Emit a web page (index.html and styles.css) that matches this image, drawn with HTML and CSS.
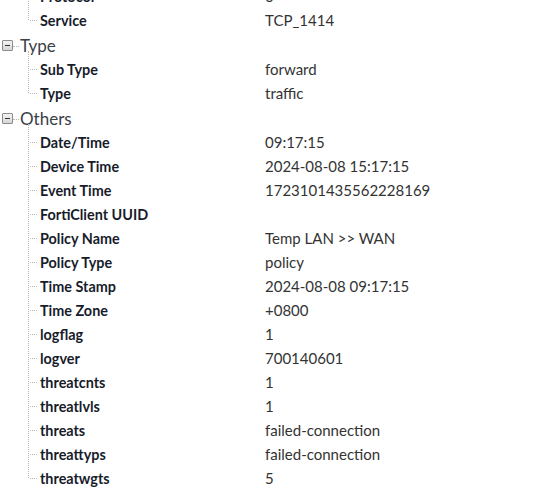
FILE: index.html
```html
<!DOCTYPE html>
<html>
<head>
<meta charset="utf-8">
<link rel="stylesheet" href="styles.css">
</head>
<body>
<div class="tree">
  <ul class="children">
    <li class="row"><span class="key">Protocol</span><span class="val">6</span></li>
    <li class="row"><span class="key">Service</span><span class="val">TCP_1414</span></li>
  </ul>
  <div class="group">
    <div class="head"><span class="toggle"></span><span class="title">Type</span></div>
    <ul class="children">
      <li class="row"><span class="key">Sub Type</span><span class="val">forward</span></li>
      <li class="row"><span class="key">Type</span><span class="val">traffic</span></li>
    </ul>
  </div>
  <div class="group">
    <div class="head"><span class="toggle"></span><span class="title">Others</span></div>
    <ul class="children">
      <li class="row"><span class="key">Date/Time</span><span class="val">09:17:15</span></li>
      <li class="row"><span class="key">Device Time</span><span class="val">2024-08-08 15:17:15</span></li>
      <li class="row"><span class="key">Event Time</span><span class="val">1723101435562228169</span></li>
      <li class="row"><span class="key">FortiClient UUID</span><span class="val"></span></li>
      <li class="row"><span class="key">Policy Name</span><span class="val">Temp LAN &gt;&gt; WAN</span></li>
      <li class="row"><span class="key">Policy Type</span><span class="val">policy</span></li>
      <li class="row"><span class="key">Time Stamp</span><span class="val">2024-08-08 09:17:15</span></li>
      <li class="row"><span class="key">Time Zone</span><span class="val">+0800</span></li>
      <li class="row"><span class="key">logflag</span><span class="val">1</span></li>
      <li class="row"><span class="key">logver</span><span class="val">700140601</span></li>
      <li class="row"><span class="key">threatcnts</span><span class="val">1</span></li>
      <li class="row"><span class="key">threatlvls</span><span class="val">1</span></li>
      <li class="row"><span class="key">threats</span><span class="val">failed-connection</span></li>
      <li class="row"><span class="key">threattyps</span><span class="val">failed-connection</span></li>
      <li class="row"><span class="key">threatwgts</span><span class="val">5</span></li>
    </ul>
  </div>
</div>
</body>
</html>
```
FILE: styles.css
```css
html, body {
  margin: 0;
  padding: 0;
  background: #ffffff;
  overflow: hidden;
}
body {
  font-family: Lato, "Open Sans", sans-serif;
  color: #333333;
}
.tree {
  margin-top: -16px;
}
.children {
  list-style: none;
  margin: 0 0 0 28px;
  padding: 0;
  position: relative;
}
.children::before {
  content: "";
  position: absolute;
  left: 0;
  top: -6px;
  bottom: 12px;
  border-left: 1px dotted #b8b8b8;
}
.row {
  display: flex;
  align-items: center;
  height: 24px;
  position: relative;
  padding-left: 12px;
}
.row::before {
  content: "";
  position: absolute;
  left: 2px;
  top: 12px;
  width: 7px;
  border-top: 1px dotted #b8b8b8;
}
.key {
  width: 225px;
  flex: none;
  font-size: 14.4px;
  font-weight: 700;
  color: #171c2b;
}
.val {
  font-size: 15px;
  color: #333333;
}
.head {
  display: flex;
  align-items: center;
  height: 24px;
  font-size: 17px;
  padding-top: 1px;
}
.toggle {
  width: 9px;
  height: 9px;
  margin-left: 2px;
  border: 1px solid #8c8c8c;
  border-radius: 1px;
  background: linear-gradient(#f4f4f4, #d6d6d6);
  position: relative;
  flex: none;
}
.toggle::before {
  content: "";
  position: absolute;
  left: 2px;
  right: 2px;
  top: 4px;
  height: 1px;
  background: #333;
}
.toggle::after {
  content: "";
  position: absolute;
  left: 10px;
  top: 5px;
  width: 6px;
  border-top: 1px dotted #b8b8b8;
}
.title {
  margin-left: 7px;
  color: #3a3f48;
}
```
